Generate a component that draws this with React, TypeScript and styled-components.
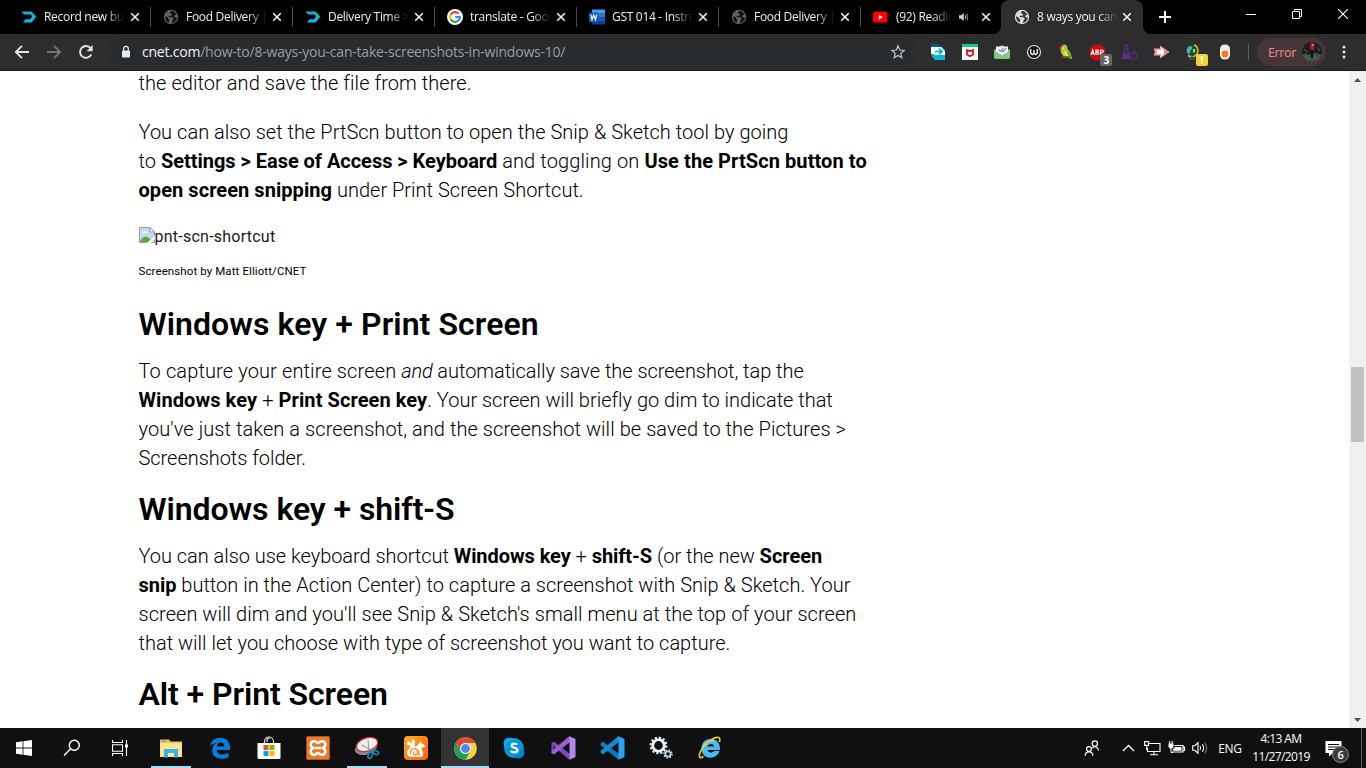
import React from 'react';
import styled, { createGlobalStyle } from 'styled-components';

const Global = createGlobalStyle`
  * { box-sizing: border-box; }
  html, body { margin: 0; padding: 0; overflow: hidden; background: #fff; }
  svg { display: block; flex: none; }
`;

const Screen = styled.div`
  width: 1366px;
  height: 768px;
  display: flex;
  flex-direction: column;
  overflow: hidden;
  font-family: 'Open Sans', 'Noto Sans', sans-serif;
`;

/* ---------- Tab strip ---------- */

const TabStrip = styled.div`
  height: 34px;
  background: #000;
  display: flex;
  padding-left: 8px;
  flex: none;
`;

const TabBox = styled.div<{ $active?: boolean; $divider?: boolean }>`
  position: relative;
  width: 142px;
  height: 34px;
  display: flex;
  align-items: center;
  padding: 0 ${p => (p.$divider ? 8 : 9)}px 0 13px;
  background: ${p => (p.$active ? '#2d2d2d' : 'transparent')};
  border-radius: ${p => (p.$active ? '8px 8px 0 0' : '0')};
  margin-left: ${p => (p.$active ? '-1px' : '0')};
  &::after {
    content: '';
    display: ${p => (p.$divider ? 'block' : 'none')};
    position: absolute;
    right: -1px;
    top: 7px;
    width: 1px;
    height: 20px;
    background: #4a4a4a;
  }
`;

const Flare = styled.i<{ $side: 'left' | 'right' }>`
  position: absolute;
  bottom: 0;
  ${p => p.$side}: -8px;
  width: 8px;
  height: 8px;
  background: radial-gradient(
    circle at ${p => (p.$side === 'left' ? '0 0' : '100% 0')},
    transparent 7.5px,
    #2d2d2d 8.5px
  );
`;

const TabTitle = styled.span<{ $w: number }>`
  margin-left: 7px;
  width: ${p => p.$w}px;
  overflow: hidden;
  white-space: nowrap;
  font-size: 12px;
  line-height: 16px;
  letter-spacing: -0.3px;
  color: #f1f1f1;
  mask-image: linear-gradient(to right, #000 calc(100% - 20px), transparent);
`;

const TabEnd = styled.span`
  margin-left: auto;
  display: flex;
  align-items: center;
  gap: 9px;
`;

const NewTab = styled.div`
  width: 44px;
  display: flex;
  align-items: center;
  justify-content: center;
`;

const WindowControls = styled.div`
  margin-left: auto;
  display: flex;
  height: 28px;
`;

const ControlCell = styled.div`
  width: 46px;
  display: flex;
  align-items: center;
  justify-content: center;
`;

/* ---------- Toolbar ---------- */

const Toolbar = styled.div`
  height: 37px;
  flex: none;
  background: #2d2d2d;
  border-bottom: 1px solid #1c1a1b;
  display: flex;
  align-items: center;
`;

const NavButtons = styled.div`
  width: 108px;
  padding-left: 14px;
  display: flex;
  align-items: center;
  gap: 16px;
`;

const Omnibox = styled.div`
  width: 808px;
  height: 28px;
  border-radius: 14px;
  background: #292c2f;
  display: flex;
  align-items: center;
  padding: 0 10px 0 12px;
`;

const Url = styled.span`
  margin-left: 10px;
  flex: 1;
  white-space: nowrap;
  font-size: 14px;
  line-height: 20px;
  letter-spacing: -0.22px;
  color: #989ea4;
`;

const Host = styled.span`
  color: #f3f4f5;
`;

const Extensions = styled.div`
  display: flex;
  align-items: center;
  padding-left: 7px;
`;

const ExtSlot = styled.div`
  position: relative;
  width: 31.9px;
  height: 28px;
  display: flex;
  align-items: center;
  justify-content: center;
  svg { margin-left: -1px; }
`;

const ExtBadge = styled.span<{ $bg: string; $fg: string }>`
  position: absolute;
  right: 2px;
  bottom: 0;
  width: 12px;
  height: 12px;
  border-radius: 2px;
  background: ${p => p.$bg};
  color: ${p => p.$fg};
  font-size: 10px;
  font-weight: 700;
  line-height: 12px;
  text-align: center;
`;

const ToolDivider = styled.i`
  width: 1px;
  height: 16px;
  margin: 0 8px 0 6px;
  background: #5c5c5c;
`;

const ProfilePill = styled.div`
  width: 69px;
  height: 28px;
  border-radius: 14px;
  background: #473638;
  color: #f0888a;
  font-size: 12.5px;
  letter-spacing: -0.35px;
  display: flex;
  align-items: center;
  justify-content: space-between;
  padding: 0 4px 0 11px;
`;

const MenuButton = styled.div`
  width: 36px;
  display: flex;
  justify-content: center;
`;

/* ---------- Page ---------- */

const Viewport = styled.div`
  flex: 1;
  min-height: 0;
  display: flex;
  overflow: hidden;
  background: #fff;
`;

const Article = styled.article`
  flex: 1;
  min-width: 0;
  overflow: hidden;
  padding-left: 138.5px;
  color: #000;
  font-family: Roboto, sans-serif;
  font-weight: 300;
`;

const Paragraph = styled.p<{ $lead?: boolean; $last?: boolean }>`
  margin: ${p => (p.$lead ? '-2px' : '0')} 0 ${p => (p.$last ? '16px' : '20px')};
  font-size: 20px;
  line-height: 29px;
`;

const Line = styled.span<{ $ls?: number }>`
  display: block;
  height: 29px;
  white-space: pre;
  letter-spacing: ${p => p.$ls ?? 0.045}px;
`;

const Run = styled.span<{ $ls: number }>`
  letter-spacing: ${p => p.$ls}px;
`;

const Strong = styled.strong<{ $ls?: number }>`
  font-weight: 700;
  letter-spacing: ${p => p.$ls ?? -0.03}px;
`;

const Light = styled.span`
  font-weight: 300;
`;

const Em = styled.em`
  letter-spacing: -0.2px;
`;

const Figure = styled.figure`
  margin: 0 0 3px;
  padding-top: 2px;
  height: 76px;
`;

const MissingImage = styled.div`
  display: flex;
  height: 20px;
  font-size: 16px;
  font-weight: 400;
  line-height: 20px;
  letter-spacing: 0.24px;
  color: #1a1a1a;
`;

const Caption = styled.figcaption`
  margin-top: 17px;
  font-size: 11.5px;
  font-weight: 400;
  line-height: 14px;
  letter-spacing: 0.1px;
`;

const Heading = styled.h2<{ $ls?: number }>`
  margin: 0 0 13px;
  height: 40px;
  font-size: 32px;
  font-weight: 600;
  line-height: 40px;
  letter-spacing: ${p => p.$ls ?? 0.08}px;
  white-space: nowrap;
`;

const Scrollbar = styled.div`
  width: 17px;
  background: #f0f0f0;
  display: flex;
  flex-direction: column;
  align-items: center;
`;

const ScrollArrow = styled.div`
  height: 17px;
  display: flex;
  align-items: center;
`;

const ScrollTrack = styled.div`
  flex: 1;
  padding-top: 279px;
`;

const ScrollThumb = styled.div`
  width: 13px;
  height: 75px;
  background: #c1c1c1;
`;

/* ---------- Taskbar ---------- */

const Taskbar = styled.div`
  height: 40px;
  flex: none;
  background: #101010;
  display: flex;
  color: #fff;
`;

const TaskButton = styled.div<{ $open?: boolean; $active?: boolean }>`
  width: 48px;
  height: 40px;
  display: flex;
  align-items: center;
  justify-content: center;
  background: ${p => (p.$active ? '#333' : 'transparent')};
  background-image: ${p => (p.$open ? 'linear-gradient(#a6d8f7, #a6d8f7)' : 'none')};
  background-size: ${p => (p.$active ? '48px' : '40px')} 2px;
  background-position: bottom center;
  background-repeat: no-repeat;
`;

const Apps = styled.div`
  display: flex;
  gap: 1px;
  margin-left: 3px;
`;

const Tray = styled.div`
  margin-left: auto;
  display: flex;
  align-items: center;
`;

const TrayCell = styled.div<{ $w: number }>`
  width: ${p => p.$w}px;
  height: 40px;
  display: flex;
  align-items: center;
  justify-content: center;
  font-size: 12px;
  letter-spacing: -0.3px;
`;

const ActionCenter = styled(TrayCell)`
  position: relative;
  padding-right: 9px;
`;

const Clock = styled.div`
  width: 66px;
  display: flex;
  flex-direction: column;
  align-items: center;
  font-size: 12px;
  line-height: 18px;
  letter-spacing: -0.6px;
`;

const Count = styled.span`
  position: absolute;
  left: 18px;
  top: 18px;
  width: 17px;
  height: 17px;
  border: 1px solid #858585;
  border-radius: 50%;
  background: #3b3b3b;
  font-size: 11px;
  font-weight: 600;
  line-height: 15px;
  text-align: center;
`;

const ShowDesktop = styled.div`
  width: 5px;
  height: 40px;
  border-left: 1px solid #5d5d5d;
`;

/* ---------- Browser icons ---------- */

const Dlogo = () => (
  <svg width="16" height="16" viewBox="0 0 16 16">
    <path d="M.5 2.500h10L15.200 7.500 13.600 9.500 9.500 5.500H3.200Z" fill="#12b5cf" />
    <path d="M15.200 7.500 10.700 13.500H2l2.400-3.200h4.800L12 6Z" fill="#0bb9e6" />
  </svg>
);
const Globe = ({ c, land }: { c: string; land: string }) => (
  <svg width="16" height="16" viewBox="0 0 16 16">
    <circle cx="8" cy="8" r="7.200" fill={c} />
    <path d="M8.600 1.800c-1 .7-1.900 1.400-1.400 2.400.5.9 1.700.3 1.900 1.300.2 1.200-1.500 1.200-2.700 1.300-1 .1-.9 1.300.2 1.400 1.400.1 3.500-.2 3.900 1 .4 1.100-.9 1.600-1.200 2.600-.2.9-.3 1.600-1 2.300 3.200-.2 5.600-2.800 5.700-5.800-1.200.9-1.700-.1-2.500-.6-.8-.5-.3-1.300.4-1.500.5-.2 1.100-.2 1.500-.3-.8-2.100-2.600-3.700-4.800-4.100Z" fill={land} />
    <path d="M2 7.200c.9.5 2.400.7 2.700 1.600.3 1 1.500 1.200 1.500 2.300 0 .9-.2 1.700-.5 2.400C3.400 12.500 2 10.400 2 7.200Z" fill={land} />
  </svg>
);
const Google = () => (
  <svg width="16" height="16" viewBox="0 0 16 16">
    <circle cx="8" cy="8" r="8" fill="#fff" />
    <g fill="none" strokeWidth="2.200">
      <path d="M11.600 4.700A4.900 4.900 0 0 0 3.700 5.700" stroke="#ea4335" />
      <path d="M3.700 5.700a4.900 4.900 0 0 0 0 4.600" stroke="#fbbc05" />
      <path d="M3.700 10.300a4.900 4.900 0 0 0 7.500 1.400" stroke="#34a853" />
      <path d="M11.200 11.700A4.800 4.800 0 0 0 12.900 8H8.200" stroke="#4285f4" />
    </g>
  </svg>
);
const Word = () => (
  <svg width="16" height="16" viewBox="0 0 16 16">
    <rect x="3" y="0.500" width="13" height="4" fill="#41a5ee" />
    <rect x="3" y="4.400" width="13" height="4" fill="#2b7cd3" />
    <rect x="3" y="8.200" width="13" height="3.800" fill="#185abd" />
    <rect x="3" y="12" width="13" height="3.500" fill="#103f91" />
    <rect x="0" y="3.500" width="9.500" height="9.500" rx=".8" fill="#185abd" />
    <path d="M1.800 5.700 3 10.700 4.700 6l1.700 4.700L7.700 5.700" fill="none" stroke="#fff" strokeWidth="1.200" />
  </svg>
);
const Youtube = () => (
  <svg width="16" height="16" viewBox="0 0 16 16">
    <rect x="0" y="2.700" width="14.500" height="10.800" rx="2.600" fill="#f00" />
    <path d="M5.800 5.700v4.700L9.800 8Z" fill="#fff" />
  </svg>
);
const Cross = () => (
  <svg width="14" height="14" viewBox="0 0 14 14">
    <path d="M3.200 3.200l7.600 7.600M10.800 3.200l-7.600 7.600" stroke="#f1f1f1" strokeWidth="1.600" />
  </svg>
);
const Audio = () => (
  <svg width="12" height="12" viewBox="0 0 12 12">
    <path d="M1 4.300h2L5.800 2v8L3 7.700H1Z" fill="#ccc" />
    <path d="M7.500 4v4M9.200 2.500v7" stroke="#999" strokeWidth="1" />
  </svg>
);
const Back = ({ c, flip }: { c: string; flip?: boolean }) => (
  <svg width="16" height="16" viewBox="0 0 16 16">
    <path d={flip ? 'M1 8h13M8 1.800 14.200 8 8 14.200' : 'M15 8H2M8 1.800 1.800 8 8 14.200'} fill="none" stroke={c} strokeWidth="1.900" />
  </svg>
);
const Reload = () => (
  <svg width="16" height="16" viewBox="0 0 16 16">
    <path d="M13.300 10.500A5.900 5.900 0 1 1 12.600 4.200" fill="none" stroke="#e4e4e4" strokeWidth="1.900" />
    <path d="M14.700 1v6.200H8.600Z" fill="#e4e4e4" />
  </svg>
);
const Lock = () => (
  <svg width="12" height="14" viewBox="0 0 12 14">
    <rect x="2" y="5.500" width="8" height="7" rx="1" fill="#e6e8ea" />
    <path d="M3.700 6V3.700a2.300 2.300 0 0 1 4.600 0V6" fill="none" stroke="#e6e8ea" strokeWidth="1.300" />
  </svg>
);
const Star = () => (
  <svg width="16" height="16" viewBox="0 0 16 16">
    <path d="M8 1.800 9.700 6l4.500.4-3.400 3 1 4.400L8 11.500l-3.800 2.300 1-4.400-3.400-3L6.300 6Z" fill="none" stroke="#c3c6c9" strokeWidth="1.200" />
  </svg>
);

const extensions: { icon: React.ReactNode; badge?: [string, string, string] }[] = [
  { icon: (
    <svg width="16" height="16" viewBox="0 0 16 16">
      <path d="M1 0h8l3 3H1Z" fill="#07558b" />
      <path d="M10 3h2l3 3v10H5L1.500 12V11H10Z" fill="#00b9db" />
      <path d="M1 3h10l4 4.500V11H5.500L1 10Z" fill="#fff" />
      <path d="M5 7.500h7M9 4.700 12 7.500 9 10.300" fill="none" stroke="#00a8d5" strokeWidth="1.700" />
    </svg>) },
  { icon: (
    <svg width="16" height="16" viewBox="0 0 16 16">
      <rect width="16" height="16" fill="#f5f5f5" /><rect width="16" height="3" fill="#12c984" />
      <path d="M5 6 8 7.200 11 6v4.500L8 12.200l-3-1.700Z" fill="none" stroke="#bd1c2b" strokeWidth="1.800" />
    </svg>) },
  { icon: (
    <svg width="16" height="16" viewBox="0 0 16 16">
      <path d="M0 6 8 1l8 5v7.500a1.500 1.500 0 0 1-1.500 1.500h-13A1.500 1.500 0 0 1 0 13.500Z" fill="#76bd77" />
      <path d="M2 2.500h12V8l-6 3.500L2 8Z" fill="#f2f3fa" />
      <path d="m4.500 5.500 1.800 2 3-3.500M8 6.700l1 .9 3-3.500" fill="none" stroke="#6a70d0" strokeWidth="1.100" />
      <path d="m0 6.500 8 5 8-5V14H0Z" fill="#86c983" />
    </svg>) },
  { icon: (
    <svg width="16" height="16" viewBox="0 0 16 16">
      <circle cx="8" cy="8" r="6.500" fill="#151515" stroke="#dcdcdc" strokeWidth="1.200" />
      <path d="M4.700 5v4.200L6.300 10.700 8 9.300 9.700 10.700l1.600-1.500V5M8 6v3.500" fill="none" stroke="#fff" strokeWidth="1.300" />
    </svg>) },
  { icon: (
    <svg width="16" height="16" viewBox="0 0 16 16">
      <path d="M2.500 5C2.500 2 4 .5 6 .5 8.700.5 9.500 2.500 9.500 5L12 8l2.500 7H12l-2-2.500H6C3.500 11 2.500 8 2.500 5Z" fill="#a2cb2e" />
      <path d="M5.500 7c3-1 4 1 4.500 5-3 .5-5-1-4.500-5Z" fill="#dfe356" />
      <path d="M10 8l2 4 1.500 3" stroke="#3f9c35" strokeWidth="1.200" fill="none" />
      <path d="M1.500 5.500C1 2 3 .5 5.500 1L4.700 4Z" fill="#e9252f" /><circle cx="5" cy="3.800" r="1.300" fill="#fff" /><circle cx="5" cy="3.800" r=".5" fill="#222" />
      <path d="M3.500 13.300h8" stroke="#9b4a18" strokeWidth="1.500" />
    </svg>) },
  { icon: (
    <svg width="17" height="17" viewBox="0 0 17 17">
      <path d="M5 .5h7L16.500 5v7L12 16.500H5L.5 12V5Z" fill="#c70d0d" />
      <path d="m2 11 1.700-5 1.700 5M2.700 9.500h2M7 6v4.500h1.300q1.300 0 1.300-1.200t-1.300-1.100H7q2.300 0 2.300-1.100T8 6ZM11.500 11V6h1.400q1.400 0 1.400 1.300t-1.400 1.400h-1" fill="none" stroke="#fff" strokeWidth="1.200" />
    </svg>), badge: ['3', '#666', '#fff'] },
  { icon: (
    <svg width="17" height="17" viewBox="0 0 17 17">
      <path d="M3.500 1h4M4.200 1v5.500L1 14.500h8L6.800 7V1" fill="none" stroke="#5b2d91" strokeWidth="1.300" />
      <path d="M2.700 9.500h5L9 14.500H1Z" fill="#5b2d91" />
      <circle cx="12.300" cy="11.800" r="3.500" fill="#2d2d2d" stroke="#5b2d91" strokeWidth="1.200" />
      <path d="m11 13 3-3" stroke="#5b2d91" />
    </svg>) },
  { icon: (
    <svg width="17" height="16" viewBox="0 0 17 16">
      <path d="M.5 4.500H7V1.500L16.500 8 7 14.500V11.500H.5L2 8Z" fill="#f4a2a2" />
      <path d="M4 6h4V3.800L13 8l-5 4.200V10H4Z" fill="#fff" /><path d="m11 4.700 5 3.300-5 3.300Z" fill="#ee8286" />
    </svg>) },
  { icon: (
    <svg width="17" height="17" viewBox="0 0 17 17">
      <circle cx="7" cy="6.500" r="5.700" fill="#17484a" /><path d="M3 3c3-2 6 0 3 3s0 4-2 4-3-4-1-7Z" fill="#45bda5" /><path d="M8 5c2-1 3 1 2 3s-3 0-2-3Z" fill="#a6c93c" />
      <path d="M9 .8A6.200 6.200 0 1 1 3 11.500" fill="none" stroke="#e4b92c" strokeWidth="1.600" />
      <path d="M7 12v3M4 15h6" stroke="#28642f" strokeWidth="1.600" />
    </svg>), badge: ['!', '#f2d235', '#fff'] },
  { icon: (
    <svg width="16" height="16" viewBox="0 0 16 16">
      <rect x="3" y=".5" width="10" height="15" rx="4.500" fill="#ebebeb" />
      <circle cx="8" cy="10" r="3.400" fill="#f37a2c" />
    </svg>) },
];

const Avatar = () => (
  <svg width="20" height="20" viewBox="0 0 20 20">
    <defs><clipPath id="avatar"><circle cx="10" cy="10" r="10" /></clipPath></defs>
    <g clipPath="url(#avatar)">
      <rect width="20" height="20" fill="#1b201d" />
      <path d="M0 13c4-3 6 1 10-1s7 0 10 1v7H0Z" fill="#44534b" />
      <path d="M3 14l4 3m3-4 5 4M2 7l3 3m10-5 3 4" stroke="#5e6b63" />
      <path d="M8.500 1c2-1 4 0 4 3l-.5 4-2 1-2-3Z" fill="#b21d2e" />
      <circle cx="11" cy="3" r="1" fill="#e18b92" />
      <path d="M10 8v8" stroke="#101010" strokeWidth="2" />
    </g>
  </svg>
);

/* ---------- Taskbar icons ---------- */

const WindowsLogo = () => (
  <svg width="16" height="16" viewBox="0 0 16 16" fill="#fff">
    <path d="M0 2.200 6.600 1.300v6.300H0ZM7.400 1.200 16 0v7.600H7.400ZM0 8.400h6.600v6.300L0 13.800ZM7.400 8.400H16V16l-8.600-1.200Z" />
  </svg>
);
const SearchIcon = () => (
  <svg width="18" height="18" viewBox="0 0 18 18" fill="none" stroke="#fff" strokeWidth="1.400">
    <circle cx="11.300" cy="6.200" r="5" /><path d="M7.700 9.800 1 16.500" />
  </svg>
);
const TaskView = () => (
  <svg width="16" height="16" viewBox="0 0 16 16" fill="none" stroke="#fff" strokeWidth="1.100">
    <path d="M.5 0v2.500h10V0M.5 16v-2.500h10V16M.5 4.800h10v6.400H.5ZM14.500 0v16" />
    <rect x="13" y="4.500" width="3" height="3" fill="#fff" stroke="none" />
  </svg>
);
const Explorer = () => (
  <svg width="22" height="19" viewBox="0 0 22 19">
    <path d="M0 .5h9l1.500 2H22V18H0Z" fill="#f1c14a" />
    <path d="M1 1.300h5v1.400H1Z" fill="#51b8b0" />
    <path d="M0 4h22v14H0Z" fill="#ffe392" />
    <path d="M4 10h14v8.500h-4V14H8v4.500H4Z" fill="#38b3e6" />
  </svg>
);
const Edge = () => (
  <svg width="22" height="22" viewBox="0 0 22 22">
    <path d="M1 9.500C2 4 6 .8 11.300.8 17.500.8 21 5 21 10.500V13H7.700c.3 3 2.600 4.500 5.600 4.500 2.300 0 4.300-.6 6.200-1.700v4.400c-2 1-4.300 1.500-7 1.500-5.700 0-9.300-3.200-9.300-8.200 0-3.400 1.900-6.300 5-7.700C5 6.400 2.500 7.300 1 9.500ZM7.900 9.400h7.300c0-2.600-1.200-4-3.500-4-2.200 0-3.500 1.500-3.800 4Z" fill="#0a7bdc" />
  </svg>
);
const Store = () => (
  <svg width="24" height="24" viewBox="0 0 24 24">
    <path d="M7.500 8V5.500a4.500 4.500 0 0 1 9 0V8M10 6V4.500C10 3 11 2 13 2" fill="none" stroke="#dedede" strokeWidth="1.200" />
    <path d="M.5 7h23v14.500a1.500 1.500 0 0 1-1.500 1.500H2a1.500 1.500 0 0 1-1.500-1.500Z" fill="#fff" />
    <rect x="6.500" y="9" width="5" height="5" fill="#f25022" /><rect x="12.500" y="9" width="5" height="5" fill="#7fba00" />
    <rect x="6.500" y="15" width="5" height="5" fill="#00a4ef" /><rect x="12.500" y="15" width="5" height="5" fill="#ffb900" />
  </svg>
);
const Xampp = () => (
  <svg width="24" height="24" viewBox="0 0 24 24">
    <rect width="24" height="24" rx="2.500" fill="#e9792b" /><rect x=".5" y=".5" width="23" height="23" rx="2" fill="none" stroke="#b65117" />
    <path d="M8 12a3.400 3.400 0 1 1 2.200-6q1.800 2 3.600 0A3.400 3.400 0 1 1 16 12a3.400 3.400 0 1 1-2.200 6q-1.800-2-3.600 0A3.400 3.400 0 1 1 8 12ZM8.500 12h7" fill="none" stroke="#fff" strokeWidth="2.600" />
  </svg>
);
const Snip = () => (
  <svg width="26" height="24" viewBox="0 0 26 24">
    <ellipse cx="12" cy="11.500" rx="11.500" ry="7" transform="rotate(-18 12 11.500)" fill="#888" />
    <ellipse cx="13" cy="8.500" rx="11" ry="6.500" transform="rotate(-18 13 8.500)" fill="#f1f1f1" stroke="#d82c36" strokeWidth="1.200" />
    <path d="m8 9 9 5M14 4l1 11" stroke="#999" strokeWidth="1.100" />
    <g fill="none" stroke="#2088bd" strokeWidth="1.600"><ellipse cx="16.200" cy="19" rx="2" ry="3.500" transform="rotate(18 16.200 19)" /><ellipse cx="21.700" cy="16.500" rx="3" ry="1.800" transform="rotate(20 21.700 16.500)" /></g>
  </svg>
);
const UcBrowser = () => (
  <svg width="24" height="24" viewBox="0 0 24 24">
    <defs><linearGradient id="uc" x2="1" y2="1"><stop stopColor="#ffb319" /><stop offset="1" stopColor="#fa5b12" /></linearGradient></defs>
    <rect width="24" height="24" rx="4" fill="url(#uc)" />
    <path d="M7.500 2.500C11 3.500 12 6.500 10.500 9c-.8 1.300.5 2 2 1l3-2.500 1-2 1.200 2c2 .3 3 1.500 3.300 3.500l-3.500.7c0 3 1.500 3.300 1.700 6.300.1 2-1 3-3 3H7.500c-3 0-4.500-2-4.500-4.200 0-3 3-4.300 3.300-6.800L3 8.500C2.500 5 6 4.500 7.300 7 8.500 6 8.500 4 7.500 2.500Z" fill="#fff" />
    <path d="M7 18.500c-2-3.500 1-6.500 4-5.800 3.500.8 3.800 5.800.5 6.300-2.500.2-3-2.500-1-3.500" fill="none" stroke="#fb8b18" strokeWidth="1.300" />
    <path d="M15 14c-1 2 .5 3 0 6" fill="none" stroke="#fb8b18" strokeWidth="1.200" />
  </svg>
);
const Chrome = () => (
  <svg width="23" height="23" viewBox="0 0 22 22">
    <circle cx="11" cy="11" r="10.800" fill="#f9cf43" />
    <path d="M1.600 5.700A10.800 10.800 0 0 1 20.400 5.800H11A5.200 5.200 0 0 0 6.400 13.500Z" fill="#dc4a3e" />
    <path d="M1.600 5.700A10.800 10.800 0 0 0 11 21.800L15.500 13.700A5.200 5.200 0 0 1 6.500 13.600Z" fill="#17a05e" />
    <circle cx="11" cy="11" r="5.200" fill="#f1f1f1" /><circle cx="11" cy="11" r="4.200" fill="#4a8af4" />
  </svg>
);
const Skype = () => (
  <svg width="22" height="22" viewBox="0 0 22 22">
    <circle cx="11" cy="11" r="9.900" fill="#0a9de0" /><circle cx="6.500" cy="6.500" r="6" fill="#0aaced" /><circle cx="15.500" cy="15.500" r="6" fill="#0680c9" /><circle cx="11" cy="11" r="8" fill="#0593db" />
    <path d="M14.200 7.700c-1-1.500-5.700-1.600-5.700.9 0 2.900 6 1.500 6 4.600 0 2.700-5.200 2.800-6.700.7" fill="none" stroke="#fff" strokeWidth="2.100" />
  </svg>
);
const VisualStudio = () => (
  <svg width="25" height="24" viewBox="0 0 25 24">
    <path d="M.5 7 3 5.500 19 18v5.500h-1L2.500 10v5L3 18 .5 17Z" fill="#7b4bb2" />
    <path d="M.5 17 3 18.500 19 6V.5h-1L.5 15Z" fill="#9561d0" />
    <path d="M18.500.3 24.500 3v18l-6 2.800V.3Z" fill="#b584ee" />
  </svg>
);
const VsCode = () => (
  <svg width="25" height="24" viewBox="0 0 25 24">
    <path d="M.5 7.700 2.800 5.500 19 18v5.500h-1L.5 9Z" fill="#1277bc" />
    <path d="M.5 16.300 2.800 18.500 19 6V.5h-1L.5 15Z" fill="#168bd4" />
    <path d="M18.500.3 24.500 3v18l-6 2.800V.3Z" fill="#2ba3ef" />
  </svg>
);
const Gears = () => (
  <svg width="24" height="24" viewBox="0 0 24 24" fill="none">
    <circle cx="9.500" cy="9.500" r="7.900" stroke="#cfe0f0" strokeWidth="2.200" strokeDasharray="2.300 1.840" />
    <circle cx="9.500" cy="9.500" r="5.800" stroke="#f1f5fa" strokeWidth="2.800" />
    <circle cx="19" cy="18" r="4.100" stroke="#cfe0f0" strokeWidth="1.400" strokeDasharray="1.500 1.720" />
    <circle cx="19" cy="18" r="2.700" stroke="#bcd3e8" strokeWidth="1.800" />
  </svg>
);
const Ie = () => (
  <svg width="24" height="24" viewBox="0 0 24 24">
    <path d="M12.500 3C18.500 3 22 7 22 12.500V14H9.500c.3 2.700 5 3.400 6.500 1h5.500c-1.500 4.500-5 6.700-9.300 6.700C7 21.700 3.500 18 3.500 12.500S7 3 12.500 3ZM9.500 10.500h6.700c-.5-3.500-6-3.500-6.700 0Z" fill="#4bb9f2" />
    <path d="M5 11C7 6 13 4 17 5" stroke="#a8e4fc" strokeWidth="1.200" fill="none" />
    <path d="M5.500 20.500C1 23.500.5 20 2.500 15.500 6 8 16 .500 20.500 1.500c1.700.4 1.500 2.500.8 4.500" fill="none" stroke="#f6c623" strokeWidth="1.700" />
  </svg>
);

const People = () => (
  <svg width="16" height="17" viewBox="0 0 16 17" fill="none" stroke="#fff" strokeWidth="1.200">
    <circle cx="10.800" cy="3.600" r="2.700" /><path d="M8.300 8c2-2.200 5.700-1.700 6.200 2.500" />
    <circle cx="5" cy="9" r="2.400" /><path d="M1.200 15.700c0-5.200 7.600-5.200 7.600 0" />
  </svg>
);
const Chevron = () => (
  <svg width="13" height="8" viewBox="0 0 13 8"><path d="m1 7 5.500-5.500L12 7" fill="none" stroke="#fff" strokeWidth="1.300" /></svg>
);
const Network = () => (
  <svg width="17" height="15" viewBox="0 0 17 15" fill="none" stroke="#fff" strokeWidth="1.100">
    <path d="M5 2.500h11v8H3.500V7M10 10.500v3M6 13.800h8M.6.600h4v3.800h-4ZM2.600 4.500v4.500" />
  </svg>
);
const Battery = () => (
  <svg width="17" height="14" viewBox="0 0 17 14">
    <path d="M6.500 4.500h8.500V11H4M15 6h1.500v3.500H15" fill="none" stroke="#fff" strokeWidth="1.100" />
    <path d="M6.500 6h7v3.700H5V7.500h1.500ZM.5 2.500h5V6L4 7.500H2L.5 6Z" fill="#fff" />
    <path d="M1.700 0v3M4.200 0v3M3 7v4.500h2" fill="none" stroke="#fff" />
  </svg>
);
const Speaker = () => (
  <svg width="17" height="14" viewBox="0 0 17 14" fill="none" stroke="#fff" strokeWidth="1.100">
    <path d="M.7 4.700h2.200L6 1.800v10.400L2.900 9.300H.7ZM8 5q1.300 2 0 4M10.300 3.200q2.700 3.800 0 7.600" />
    <path d="M12.700 1.700q4 5.300 0 10.600" stroke="#777" />
  </svg>
);
const Notice = () => (
  <svg width="17" height="17" viewBox="0 0 17 17">
    <path d="M.5 1h16v12H8l-4 3.500V13H.5Z" fill="#fff" />
    <path d="M3 4.500h11M3 7h11M3 9.500h7" stroke="#101010" />
  </svg>
);

type TabInfo = { title: string; icon: React.ReactNode; audio?: boolean; active?: boolean };
const tabs: TabInfo[] = [
  { title: 'Record new bug', icon: <Dlogo /> },
  { title: 'Food Delivery | Order', icon: <Globe c="#5f6368" land="#101010" /> },
  { title: 'Delivery Time > Edit', icon: <Dlogo /> },
  { title: 'translate - Google Search', icon: <Google /> },
  { title: 'GST 014 - Instructions', icon: <Word /> },
  { title: 'Food Delivery | Order', icon: <Globe c="#5f6368" land="#101010" /> },
  { title: '(92) Reading', icon: <Youtube />, audio: true },
  { title: '8 ways you can take', icon: <Globe c="#dcdcdc" land="#3a3a3a" />, active: true },
];

const apps: { icon: React.ReactNode; open?: boolean; active?: boolean }[] = [
  { icon: <Explorer />, open: true },
  { icon: <Edge /> },
  { icon: <Store /> },
  { icon: <Xampp /> },
  { icon: <Snip />, open: true },
  { icon: <UcBrowser /> },
  { icon: <Chrome />, open: true, active: true },
  { icon: <Skype /> },
  { icon: <VisualStudio /> },
  { icon: <VsCode /> },
  { icon: <Gears /> },
  { icon: <Ie /> },
];

export default function App() {
  return (
    <Screen>
      <Global />
      <TabStrip>
        {tabs.map((t, i) => (
          <TabBox key={i} $active={t.active} $divider={i < 6}>
            {t.active && <><Flare $side="left" /><Flare $side="right" /></>}
            {t.icon}
            <TabTitle $w={t.audio ? 56 : 81}>{t.title}</TabTitle>
            <TabEnd>{t.audio && <Audio />}<Cross /></TabEnd>
          </TabBox>
        ))}
        <NewTab>
          <svg width="12" height="12" viewBox="0 0 12 12"><path d="M6 0v12M0 6h12" stroke="#fff" strokeWidth="2" /></svg>
        </NewTab>
        <WindowControls>
          <ControlCell><svg width="10" height="10" viewBox="0 0 10 10"><path d="M0 5.500h10" stroke="#fff" /></svg></ControlCell>
          <ControlCell><svg width="10" height="10" viewBox="0 0 10 10"><path d="M.5 2.500h7v7h-7ZM2.500 2.500v-2h7v7h-2" fill="none" stroke="#fff" /></svg></ControlCell>
          <ControlCell><svg width="10" height="10" viewBox="0 0 10 10"><path d="m0 0 10 10M10 0 0 10" stroke="#fff" strokeWidth="1.100" /></svg></ControlCell>
        </WindowControls>
      </TabStrip>

      <Toolbar>
        <NavButtons><Back c="#e4e4e4" /><Back c="#757575" flip /><Reload /></NavButtons>
        <Omnibox>
          <Lock />
          <Url><Host>cnet.com</Host>/how-to/8-ways-you-can-take-screenshots-in-windows-10/</Url>
          <Star />
        </Omnibox>
        <Extensions>
          {extensions.map((e, i) => (
            <ExtSlot key={i}>
              {e.icon}
              {e.badge && <ExtBadge $bg={e.badge[1]} $fg={e.badge[2]}>{e.badge[0]}</ExtBadge>}
            </ExtSlot>
          ))}
        </Extensions>
        <ToolDivider />
        <ProfilePill>Error<Avatar /></ProfilePill>
        <MenuButton>
          <svg width="4" height="16" viewBox="0 0 4 16" fill="#e4e4e4"><circle cx="2" cy="3" r="1.500" /><circle cx="2" cy="8" r="1.500" /><circle cx="2" cy="13" r="1.500" /></svg>
        </MenuButton>
      </Toolbar>

      <Viewport>
        <Article>
          <Paragraph $lead>
            <Line $ls={0.06}>the editor and save the file from there.</Line>
          </Paragraph>
          <Paragraph>
            <Line $ls={0.03}>You can also set the PrtScn button to open the Snip &amp; Sketch tool by going</Line>
            <Line>to <Strong>Settings &gt; Ease of Access &gt; Keyboard</Strong><Run $ls={0.12}> and toggling on </Run><Strong $ls={0.08}>Use the PrtScn button to</Strong></Line>
            <Line $ls={0.01}><Strong $ls={0.06}>open screen snipping</Strong> under Print Screen Shortcut.</Line>
          </Paragraph>
          <Figure>
            <MissingImage>
              <svg width="16" height="16" viewBox="0 0 16 16">
                <path d="M.5.500h10.500l4.500 4.500v10.500H.5Z" fill="#c4d9f7" stroke="#9a9a9a" />
                <path d="M11 .5V5h4.500Z" fill="#fff" stroke="#9a9a9a" />
                <path d="M3 6q.5-2 2-1.500Q6.500 3 7.500 5 9 5 9 6Z" fill="#fff" />
                <path d="M1 15c1-4 4-6 7-5s4 3 4.500 5Z" fill="#54ab3c" />
                <path d="M8 16 16 8.500V12l-4 4Z" fill="#fff" />
              </svg>
              pnt-scn-shortcut
            </MissingImage>
            <Caption>Screenshot by Matt Elliott/CNET</Caption>
          </Figure>
          <Heading>Windows key + Print Screen</Heading>
          <Paragraph $last>
            <Line $ls={-0.04}><Run $ls={0.12}>To capture your entire screen </Run><Em>and</Em> automatically save the screenshot, tap the</Line>
            <Line $ls={-0.01}><Strong $ls={0.08}>Windows key <Light>+</Light> Print Screen key</Strong>. Your screen will briefly go dim to indicate that</Line>
            <Line $ls={0.065}>you've just taken a screenshot, and the screenshot will be saved to the Pictures &gt;</Line>
            <Line $ls={-0.04}>Screenshots folder.</Line>
          </Paragraph>
          <Heading $ls={-0.07}>Windows key + shift-S</Heading>
          <Paragraph $last>
            <Line $ls={-0.04}>You can also use keyboard shortcut <Strong $ls={-0.07}>Windows key <Light>+</Light> shift-S</Strong> (or the new <Strong>Screen</Strong></Line>
            <Line $ls={0.01}><Strong>snip</Strong> button in the Action Center) to capture a screenshot with Snip &amp; Sketch. Your</Line>
            <Line>screen will dim and you'll see Snip &amp; Sketch's small menu at the top of your screen</Line>
            <Line $ls={0}>that will let you choose with type of screenshot you want to capture.</Line>
          </Paragraph>
          <Heading $ls={-0.07}>Alt + Print Screen</Heading>
        </Article>
        <Scrollbar>
          <ScrollArrow><svg width="7" height="4" viewBox="0 0 7 4"><path d="M0 4 3.500 0 7 4Z" fill="#505050" /></svg></ScrollArrow>
          <ScrollTrack><ScrollThumb /></ScrollTrack>
          <ScrollArrow><svg width="7" height="4" viewBox="0 0 7 4"><path d="M0 0 3.500 4 7 0Z" fill="#505050" /></svg></ScrollArrow>
        </Scrollbar>
      </Viewport>

      <Taskbar>
        <TaskButton><WindowsLogo /></TaskButton>
        <TaskButton><SearchIcon /></TaskButton>
        <TaskButton><TaskView /></TaskButton>
        <Apps>
          {apps.map((a, i) => (
            <TaskButton key={i} $open={a.open} $active={a.active}>{a.icon}</TaskButton>
          ))}
        </Apps>
        <Tray>
          <TrayCell $w={48}><People /></TrayCell>
          <TrayCell $w={24}><Chevron /></TrayCell>
          <TrayCell $w={24}><Network /></TrayCell>
          <TrayCell $w={24}><Battery /></TrayCell>
          <TrayCell $w={24}><Speaker /></TrayCell>
          <TrayCell $w={36}>ENG</TrayCell>
          <Clock><span>4:13 AM</span><span>11/27/2019</span></Clock>
          <ActionCenter $w={47}><Notice /><Count>6</Count></ActionCenter>
          <ShowDesktop />
        </Tray>
      </Taskbar>
    </Screen>
  );
}
